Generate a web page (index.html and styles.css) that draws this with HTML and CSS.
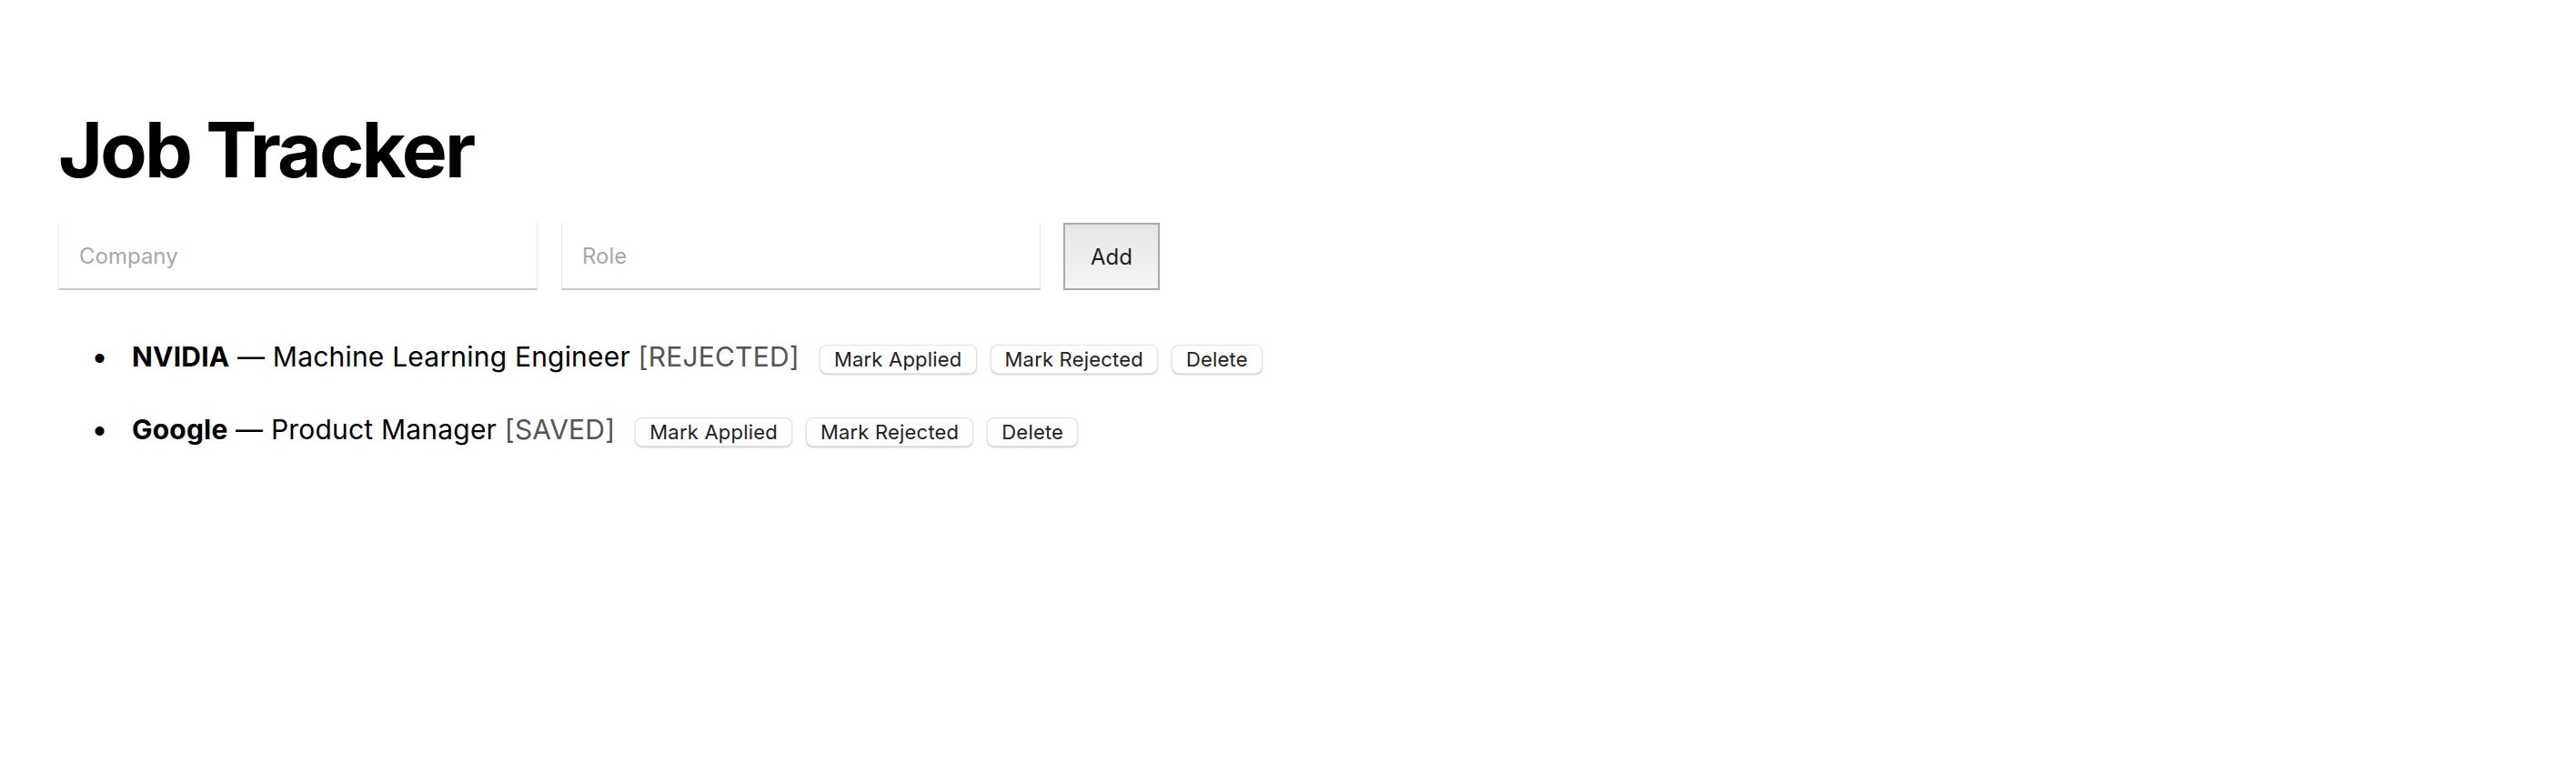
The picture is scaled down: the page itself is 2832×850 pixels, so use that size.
FILE: index.html
```html
<!DOCTYPE html>
<html lang="en">
<head>
<meta charset="utf-8">
<title>Job Tracker</title>
<link rel="stylesheet" href="styles.css">
</head>
<body>
<main class="app">
  <h1 class="title">Job Tracker</h1>
  <form class="add-form">
    <input class="field" type="text" placeholder="Company">
    <input class="field" type="text" placeholder="Role">
    <button class="add-btn" type="button">Add</button>
  </form>
  <ul class="jobs">
    <li class="job"><span class="entry"><b class="company">NVIDIA</b> — Machine Learning Engineer <span class="status">[REJECTED]</span></span><span class="actions"><button class="act" type="button">Mark Applied</button><button class="act" type="button">Mark Rejected</button><button class="act" type="button">Delete</button></span></li>
    <li class="job"><span class="entry"><b class="company">Google</b> — Product Manager <span class="status">[SAVED]</span></span><span class="actions"><button class="act" type="button">Mark Applied</button><button class="act" type="button">Mark Rejected</button><button class="act" type="button">Delete</button></span></li>
  </ul>
</main>
</body>
</html>
```
FILE: styles.css
```css
html, body {
  margin: 0;
  padding: 0;
  background: #ffffff;
}
body {
  font-family: Inter, "Noto Sans", "Liberation Sans", sans-serif;
  color: #000;
}
.app {
  padding: 114px 64px 40px 64px;
}
.title {
  margin: 0;
  font-size: 84px;
  font-weight: 700;
  line-height: normal;
  letter-spacing: -2.8px;
}
.add-form {
  display: flex;
  gap: 26px;
  margin-top: 30px;
  align-items: stretch;
}
.field {
  box-sizing: border-box;
  width: 527px;
  height: 74px;
  margin: 0;
  padding: 0 22px;
  font-family: inherit;
  font-size: 24px;
  color: #222;
  background: #fff;
  border: none;
  border-left: 1px solid #e8e8e8;
  border-right: 1px solid #e8e8e8;
  border-bottom: 2px solid #c9c9c9;
  outline: none;
}
.field::placeholder {
  color: #a8a8a8;
}
.add-btn {
  box-sizing: border-box;
  width: 106px;
  height: 74px;
  margin-left: -1px;
  font-family: inherit;
  font-size: 24px;
  color: #1e1e1e;
  border: 2px solid #aaaaaa;
  background: linear-gradient(#e7e7e7, #f4f4f4);
  padding: 0;
}
.jobs {
  margin: 53px 0 0 0;
  padding-left: 81px;
  font-size: 30px;
  letter-spacing: 0.2px;
}
.job {
  line-height: 40px;
  margin-bottom: 40px;
}
.job::marker {
  content: "\2022\00a0\00a0\00a0";
  font-size: 32px;
}
.company {
  font-weight: 700;
}
.status {
  color: #555;
}
.actions {
  display: inline-flex;
  gap: 15px;
  margin-left: 22px;
  vertical-align: middle;
}
.act {
  box-sizing: border-box;
  height: 32px;
  padding: 0 15px;
  font-family: inherit;
  font-size: 22px;
  letter-spacing: 0.2px;
  line-height: 30px;
  color: #222;
  background: #fff;
  border: 1px solid #e2e2e2;
  border-radius: 8px;
  box-shadow: 0 1px 2px rgba(0, 0, 0, 0.22);
}
```
